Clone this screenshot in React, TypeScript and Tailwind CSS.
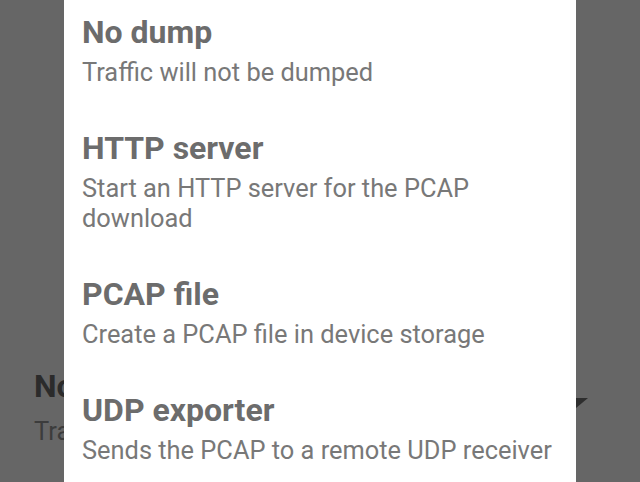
import React from "react";

const items = [
  { title: "No dump", desc: ["Traffic will not be dumped"] },
  { title: "HTTP server", desc: ["Start an HTTP server for the PCAP", "download"] },
  { title: "PCAP file", desc: ["Create a PCAP file in device storage"] },
  { title: "UDP exporter", desc: ["Sends the PCAP to a remote UDP receiver"] },
];

export default function App() {
  return (
    <div
      className="relative w-[640px] h-[482px] overflow-hidden bg-[#666666]"
      style={{ fontFamily: "Roboto, 'Noto Sans', sans-serif" }}
    >
      {/* dimmed page behind the dialog */}
      <div className="pt-[364px] pl-[34px]">
        <div className="flex items-center justify-between pr-[52px]">
          <div className="text-[32px] leading-[36px] font-bold text-[#2b2b2b]">No dump</div>
          <svg width="24" height="10" viewBox="0 0 24 10" className="mt-[34px]">
            <polygon points="0,0 24,0 12,10" fill="#2e2e2e" />
          </svg>
        </div>
        <div className="mt-[8px] text-[25.5px] leading-[30px] text-[#3c3c3c]">Traffic will not be dumped</div>
      </div>

      {/* dialog */}
      <div className="absolute left-[64px] top-0 w-[512px] h-[482px] bg-white">
        <div className="-mt-[8px]">
          {items.map((it) => (
            <div key={it.title} className="pl-[18px] pt-[22px] pb-[21px]">
              <div className="text-[32px] leading-[36px] font-bold text-[#6c6c6c]">{it.title}</div>
              <div className="mt-[7px] text-[25.4px] leading-[30px] text-[#787878] whitespace-nowrap">
                {it.desc.map((d) => (
                  <div key={d}>{d}</div>
                ))}
              </div>
            </div>
          ))}
        </div>
      </div>
    </div>
  );
}
